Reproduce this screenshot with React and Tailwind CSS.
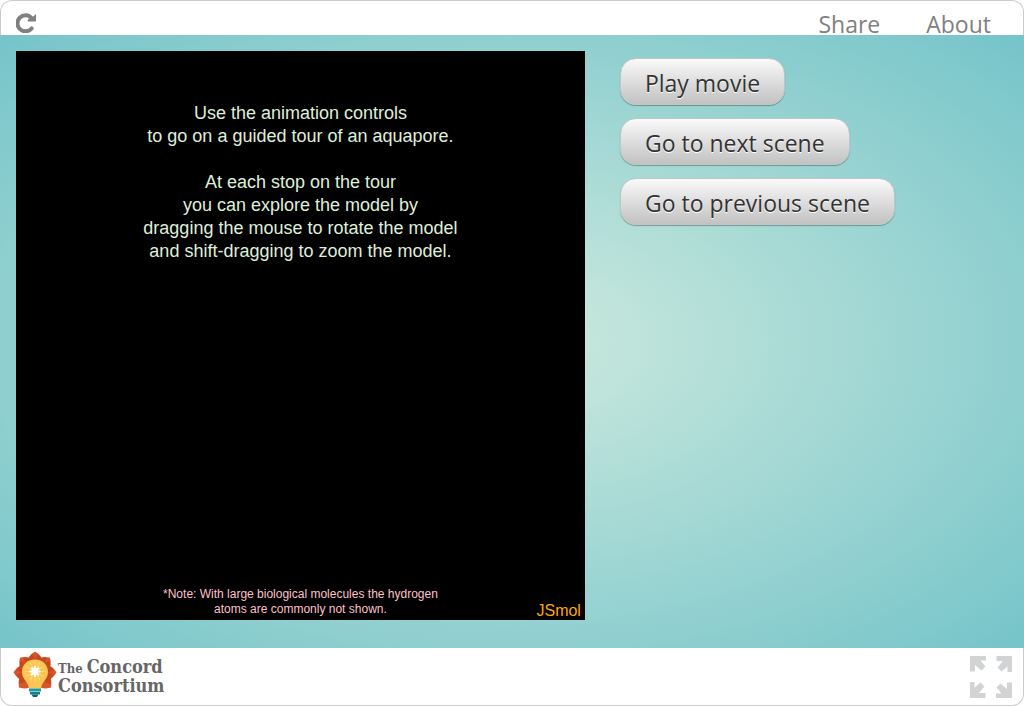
import React from "react";

const sceneActions = ["Play movie", "Go to next scene", "Go to previous scene"];

function ReloadIcon() {
  return (
    <svg className="h-5 w-5" viewBox="0 0 20 20" fill="none" aria-hidden="true">
      <path d="M15.6 15.4A8 8 0 1 1 15.6 5.2" stroke="#808080" strokeWidth="4" strokeLinecap="round" />
      <path d="M20 1V8.500H11.800V7L13.500 5L17.400 3.400Z" fill="#808080" />
    </svg>
  );
}

function BulbLogo() {
  const petals = [-132, 132, -88, 88, -44, 44, 0];
  const rays = [0, 45, 90, 135];
  return (
    <svg className="h-12 w-11 shrink-0" viewBox="0 0 44 48" aria-hidden="true">
      {petals.map((a) => (
        <path
          key={a}
          d="M22 22L15 10Q14.500 5 22 .5Q29.500 5 29 10Z"
          fill="#d95628"
          transform={`rotate(${a} 22 22)`}
        />
      ))}
      {[-110, -66, -22, 22, 66, 110].map((a) => (
        <path key={a} d="M22 22L17 9L17 3.500L22 5.500L27 3.500L27 9Z" fill="#c44820" transform={`rotate(${a} 22 22)`} />
      ))}
      <path d="M22 8.500C14 8.500 9 14 9 21C9 28.500 15 30 16 37.500H28C29 30 35 28.500 35 21C35 14 30 8.500 22 8.500Z" fill="#fac553" />
      <g stroke="#fddb7c" strokeWidth="1">
        {[0, 30, 60, 90, 120, 150].map((a) => (
          <path key={a} d="M22 10.500v20" transform={`rotate(${a} 22 20.500)`} />
        ))}
      </g>
      <g stroke="#ffffff" strokeWidth="2">
        {rays.map((a) => (
          <path key={a} d="M22 15v11" transform={`rotate(${a} 22 20.500)`} />
        ))}
      </g>
      <circle cx="22" cy="20.500" r="3.500" fill="#ffffff" />
      <path d="M16 37.500h12v3h-12z" fill="#1b9aa6" />
      <path d="M17 41h10v2.500h-10z" fill="#137f8c" />
      <path d="M18.500 43.500h7l-1.500 2.500h-4z" fill="#14656f" />
    </svg>
  );
}

function FullscreenIcon() {
  return (
    <svg className="h-11 w-11" viewBox="0 0 44 44" fill="#d1d3d4" aria-hidden="true">
      {[0, 90, 180, 270].map((a) => (
        <path key={a} d="M1 1H17V5.500H11.500L16.500 11.500L12.500 15.500L6 10V16.500H1Z" transform={`rotate(${a} 22 22)`} />
      ))}
    </svg>
  );
}

export default function App() {
  return (
    <div className="flex min-h-screen flex-col overflow-hidden bg-white font-['Open_Sans','Noto_Sans',sans-serif]">
      <header className="flex h-[35px] items-start justify-between rounded-t-xl border border-b-0 border-[#c8cccc] pr-8 pl-[15px]">
        <button type="button" aria-label="Reload" className="mt-3">
          <ReloadIcon />
        </button>
        <nav className="flex gap-[46px] text-[23px] leading-[46px] text-[#808080]">
          <a href="#share">Share</a>
          <a href="#about">About</a>
        </nav>
      </header>

      <main className="flex flex-1 items-start gap-[35px] bg-[radial-gradient(ellipse_at_center,#cdeade_0%,#75c4c9_100%)] px-4 pt-4 pb-7">
        <section className="flex aspect-square w-[57.35%] shrink-0 flex-col justify-between bg-black font-['Liberation_Sans',sans-serif]">
          <div className="pt-[51px] text-center text-lg leading-[23px] text-[#dfefdc]">
            <p>
              Use the animation controls
              <br />
              to go on a guided tour of an aquapore.
            </p>
            <p className="mt-[23px]">
              At each stop on the tour
              <br />
              you can explore the model by
              <br />
              dragging the mouse to rotate the model
              <br />
              and shift-dragging to zoom the model.
            </p>
          </div>
          <div className="grid grid-cols-[1fr_auto_1fr] items-end">
            <p className="col-start-2 pb-[3px] text-center text-xs leading-[15px] text-[#ffc0cb]">
              *Note: With large biological molecules the hydrogen
              <br />
              atoms are commonly not shown.
            </p>
            <span className="justify-self-end pr-1 text-base leading-[18px] text-[#ffa500]">JSmol</span>
          </div>
        </section>

        <div className="flex flex-col items-start gap-[13px] pt-[7px]">
          {sceneActions.map((label) => (
            <button
              key={label}
              type="button"
              className="h-[47px] rounded-2xl border border-[#c0c6c6] bg-linear-to-b from-[#fafafa] to-[#c2c2c2] px-6 pt-1 text-[23px] leading-[41px] whitespace-nowrap text-[#333333] shadow-[0_1px_1px_rgba(0,0,0,0.3)] [text-shadow:0_1px_0_#ffffff]"
            >
              {label}
            </button>
          ))}
        </div>
      </main>

      <footer className="flex h-[58px] items-start justify-between rounded-b-xl border border-t-0 border-[#c8cccc] pr-[10px] pl-3">
        <a href="#concord" className="flex pt-[3px] font-['DejaVu_Serif_Condensed','DejaVu_Serif',serif] font-bold text-[#666666]">
          <BulbLogo />
          <span className="flex flex-col pt-[7px] pl-px text-[18px] leading-[17px]">
            <span className="flex items-baseline gap-1">
              <span className="text-[13px] leading-[17px]">The</span>
              <span>Concord</span>
            </span>
            <span>Consortium</span>
          </span>
        </a>
        <button type="button" aria-label="Fullscreen" className="mt-[7px]">
          <FullscreenIcon />
        </button>
      </footer>
    </div>
  );
}
